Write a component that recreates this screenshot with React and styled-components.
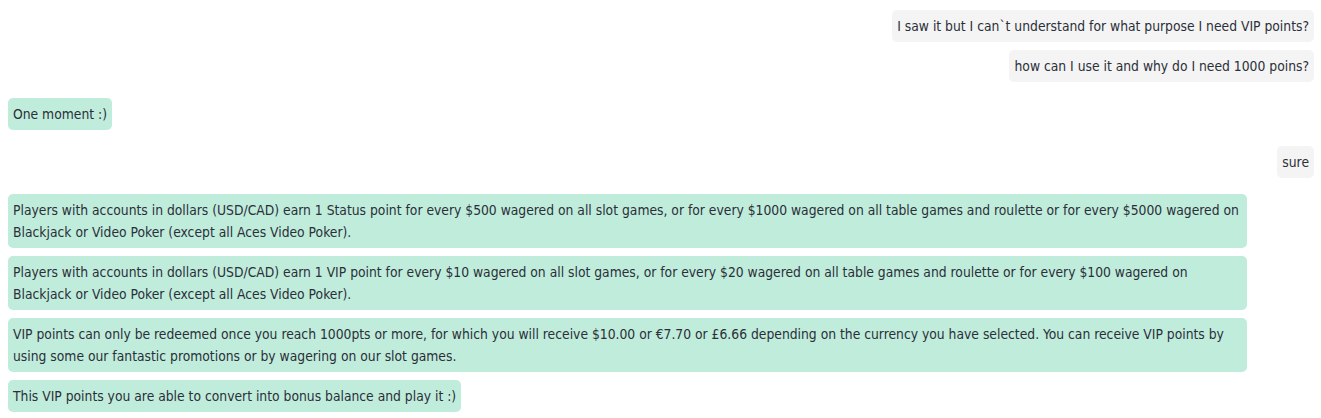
import React from 'react'
import styled, { createGlobalStyle } from 'styled-components';

const messages = [
    { from: 'user', text: 'I saw it but I can`t understand for what purpose I need VIP points?' },
    { from: 'user', text: 'how can I use it and why do I need 1000 poins?' },
    { from: 'agent', text: 'One moment :)' },
    { from: 'user', text: 'sure' },
    { from: 'agent', text: 'Players with accounts in dollars (USD/CAD) earn 1 Status point for every $500 wagered on all slot games, or for every $1000 wagered on all table games and roulette or for every $5000 wagered on Blackjack or Video Poker (except all Aces Video Poker).' },
    { from: 'agent', text: 'Players with accounts in dollars (USD/CAD) earn 1 VIP point for every $10 wagered on all slot games, or for every $20 wagered on all table games and roulette or for every $100 wagered on Blackjack or Video Poker (except all Aces Video Poker).' },
    { from: 'agent', text: 'VIP points can only be redeemed once you reach 1000pts or more, for which you will receive $10.00 or €7.70 or £6.66 depending on the currency you have selected. You can receive VIP points by using some our fantastic promotions or by wagering on our slot games.' },
    { from: 'agent', text: 'This VIP points you are able to convert into bonus balance and play it :)' },
]

function App() {
    return (
        <>
            <GlobalStyle />
            <Chat>
                {messages.map((m, i) => {
                    const prev = messages[i - 1]
                    const switched = prev && prev.from !== m.from
                    return (
                        <Row key={i} $mine={m.from === 'user'} $switched={switched}>
                            <Bubble $mine={m.from === 'user'}>{m.text}</Bubble>
                        </Row>
                    )
                })}
            </Chat>
        </>
    )
}

export default App

const GlobalStyle = createGlobalStyle`
    body{
        margin:0;
        background:#ffffff;
        font-family:"DejaVu Sans Condensed", "DejaVu Sans", sans-serif;
    }
`

const Chat = styled.div`
    display:flex;
    flex-direction:column;
    padding:10px 7px 8px 8px;
`

const Row = styled.div`
    display:flex;
    justify-content:${p => p.$mine ? 'flex-end' : 'flex-start'};
    margin-top:${p => p.$switched ? '16px' : '8px'};
    &:first-child{
        margin-top:0;
    }
`

const Bubble = styled.div`
    max-width:1229px;
    padding:5px 5px;
    border-radius:5px;
    font-size:13.75px;
    line-height:22px;
    color:#2b2f38;
    background:${p => p.$mine ? '#f4f4f4' : '#c0ecdc'};
`
